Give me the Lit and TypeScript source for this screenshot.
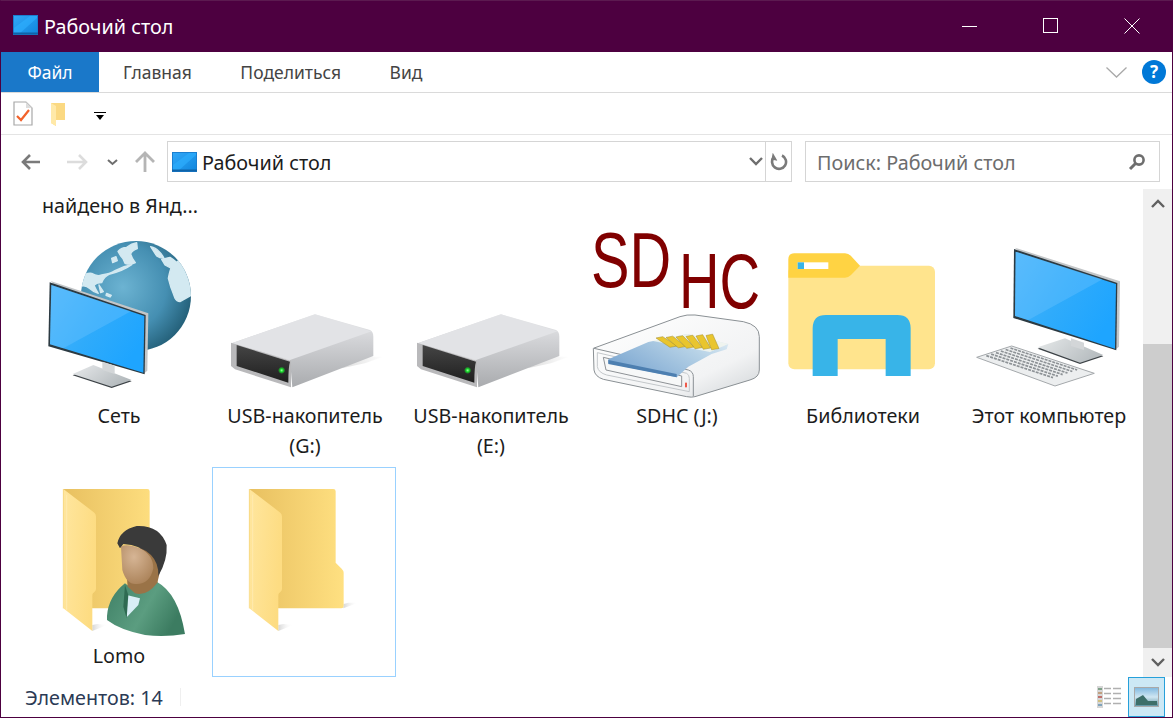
import { LitElement, html, css, svg } from "lit";
import { customElement } from "lit/decorators.js";

const desktop = svg`
  <defs><linearGradient id="dk" x1="0" y1="0" x2="1" y2="1"><stop offset="0" stop-color="#32a8f8"/><stop offset="1" stop-color="#0f86dd"/></linearGradient></defs>
  <rect x="0.5" y="0.5" width="24" height="19" fill="url(#dk)" stroke="#1a7fd0"/>
  <path d="M1 19V13L17 1H24V3L6 19Z" fill="#2fb0ff" opacity=".6"/>
  <rect x="0" y="17.5" width="25" height="2" fill="#0f63a8"/>`;

function monitor(ox: number, oy: number, p: number[][], id: string) {
  const [a, b, c, d] = p;
  return svg`<g transform="translate(${ox} ${oy}) scale(.3333)">
    <polygon points="${a[0] - 2},${a[1] - 12} ${b[0] + 12},${b[1] - 8} ${c[0] + 12},${c[1] - 6} ${c[0]},${c[1] + 4}" fill="#c3c6c8"/>
    <polygon points="${a[0] - 5},${a[1] - 8} ${b[0] + 4},${b[1] - 3} ${c[0] + 4},${c[1] + 5} ${d[0] - 5},${d[1] + 6}" fill="#2c3a42"/>
    <polygon points="${a.join(",")} ${b.join(",")} ${c.join(",")} ${d.join(",")}" fill="url(#${id})"/>
    <polygon points="${a.join(",")} ${b[0] - 40},${b[1] - 14} ${d[0] + 40},${d[1] + 12} ${d.join(",")}" fill="#72c6ff" opacity=".35"/>
  </g>`;
}
const scrGrad = (id: string) => svg`<linearGradient id="${id}" x1="0" y1="0" x2="1" y2=".6"><stop offset="0" stop-color="#4db6fb"/><stop offset=".55" stop-color="#2fabfb"/><stop offset="1" stop-color="#1ea5ff"/></linearGradient>`;

const stand = (pts: string, neck: string, id: string) => svg`
  <polygon points="${pts}" fill="#3c4246" transform="translate(0 4)"/>
  <polygon points="${pts}" fill="url(#${id})"/>
  <polygon points="${neck}" fill="#d3d6d8"/>`;

const network = svg`
  <defs>
    <radialGradient id="gl" cx=".38" cy=".42" r=".72"><stop offset="0" stop-color="#6cb3d2"/><stop offset=".55" stop-color="#458fb2"/><stop offset="1" stop-color="#1a5268"/></radialGradient>
    <clipPath id="gc"><circle cx="318" cy="198" r="165"/></clipPath>
    ${scrGrad("sn")}
    <linearGradient id="bs" x1="0" y1="0" x2="1" y2=".5"><stop offset="0" stop-color="#e8eaec"/><stop offset="1" stop-color="#b4babd"/></linearGradient>
  </defs>
  <g transform="translate(30 230) scale(.3333)">
    <circle cx="318" cy="198" r="165" fill="url(#gl)"/>
    <g clip-path="url(#gc)" fill="#d3e9f1" stroke="#d3e9f1" stroke-width="4" stroke-linejoin="round">
      <path d="M264 64Q275 52 290 52Q305 40 320 38L322 56Q305 62 302 72Q306 86 316 98Q300 106 285 100Q280 84 272 78Z"/>
      <path d="M245 85L258 80L262 92L248 98Z"/>
      <path d="M150 145Q165 128 185 130Q200 140 215 135Q240 132 255 122Q280 108 305 104Q280 122 240 132Q222 140 215 158Q200 158 192 166Q198 180 205 190Q188 184 180 176Q168 165 155 168Z"/>
      <path d="M230 190L244 196L240 201L228 196Z"/><path d="M207 165L220 185L212 188Z"/>
      <path d="M362 50Q378 54 385 62Q396 72 402 85Q388 84 380 78Z"/>
      <path d="M395 88L420 82Q440 94 450 110L430 118L405 105Z"/>
      <path d="M415 145Q420 120 425 110Q436 100 445 92L470 125L490 150L485 195L450 215Q440 215 435 205Q428 185 422 170Z"/>
    </g>
  </g>
  ${monitor(30, 230, [[64, 165], [343, 258], [340, 428], [60, 343]], "sn")}
  <g transform="translate(30 230) scale(.3333)">
    ${stand("128,432 190,405 305,450 245,470", "217,395 254,407 254,432 217,420", "bs")}
  </g>`;

const drive = (ox: number) => svg`
  <defs>
    <linearGradient id="ds" x1="0" y1="0" x2="0" y2="1"><stop offset="0" stop-color="#e9eaec"/><stop offset=".35" stop-color="#d2d3d6"/><stop offset="1" stop-color="#a9abae"/></linearGradient>
    <linearGradient id="df" x1="0" y1="0" x2="0" y2="1"><stop offset="0" stop-color="#454545"/><stop offset="1" stop-color="#1f1f1f"/></linearGradient>
    <linearGradient id="dsh" x1="0" y1="0" x2="1" y2="0"><stop offset="0" stop-color="#bbb"/><stop offset="1" stop-color="#fff"/></linearGradient>
    <radialGradient id="led"><stop offset="0" stop-color="#9dff9d"/><stop offset=".45" stop-color="#16d92a"/><stop offset="1" stop-color="#16d92a" stop-opacity="0"/></radialGradient>
  </defs>
  <g transform="translate(${ox} 300) scale(.3333)">
    <polygon points="440,170 505,170 450,190 380,205" fill="url(#dsh)" opacity=".5"/>
    <path d="M50 130L300 43L465 90Q475 95 475 110V168L232 262L225 180Z" fill="url(#ds)"/>
    <path d="M50 130L300 43L470 94L225 180Z" fill="#e2e3e6"/>
    <path d="M48 128L228 182V262L60 208L48 198Z" fill="#b9b9bb"/>
    <path d="M65 135L225 185Q220 200 220 248L65 198Z" fill="url(#df)"/>
    <circle cx="200" cy="211" r="11" fill="url(#led)"/>
  </g>`;

const contacts = [0, 1, 2, 3, 4, 5];
const sdhc = svg`
  <defs>
    <linearGradient id="cb" x1="0" y1="0" x2="1" y2="1"><stop offset="0" stop-color="#fff"/><stop offset=".7" stop-color="#f2f3f4"/><stop offset="1" stop-color="#cfd3d6"/></linearGradient>
    <linearGradient id="cc" x1="0" y1=".6" x2="1" y2="0"><stop offset="0" stop-color="#7fa9d2"/><stop offset=".6" stop-color="#b5d1e6"/><stop offset="1" stop-color="#e4eff5"/></linearGradient>
  </defs>
  <text class="sd" transform="translate(591 287) scale(.74 1)" font-size="78">SD</text>
  <text class="sd" transform="translate(679 308) scale(.72 1)" font-size="78">HC</text>
  <g transform="translate(580 220) scale(.3333)">
    <path d="M40 385L300 290Q320 283 345 285L490 305Q538 315 538 350V450Q538 472 510 480L345 530Q335 533 320 530L70 478Q45 470 42 450Z" fill="url(#cb)" stroke="#8a9094" stroke-width="3"/>
    <path d="M42 385L325 450Q340 455 340 470V528" fill="none" stroke="#8a9094" stroke-width="3"/>
    <path d="M52 398L320 460Q328 464 328 475V515L80 465Q55 458 52 440Z" fill="none" stroke="#c3c7ca" stroke-width="3"/>
    <path d="M70 412L305 468V500L78 450Z" fill="#f7f8f8" stroke="#8e9296" stroke-width="3"/>
    <path d="M85 418L205 366L322 342L445 372L440 388L395 402L325 440L290 472L85 430Z" fill="url(#cc)"/>
    <path d="M85 420L290 462V472L85 432Z" fill="#4d7fb0"/>
    <path d="M215 362L322 342L445 372L390 396Z" fill="#f6f7ef" opacity=".8"/>
    ${contacts.map((i) => svg`<polygon points="${228 + i * 30},${354 - i * 1.5} ${248 + i * 30},${350 - i * 1.5} ${292 + i * 25},${378 + i * 1.5} ${270 + i * 25},${382 + i * 1.5}" fill="#e9c52e" stroke="#a08a24" stroke-width="1.5"/>`)}
    <rect x="315" y="488" width="6" height="14" fill="#ef5a4a"/>
  </g>`;

const library = svg`
  <g transform="translate(775 240) scale(.3333)">
    <rect x="40" y="77" width="440" height="311" rx="18" fill="#ffe48d"/>
    <path d="M40 113V58Q40 40 58 40H210Q220 40 228 48L255 77L228 105Q220 113 210 113Z" fill="#ffd343"/>
    <rect x="68" y="67" width="92" height="20" fill="#fff"/>
    <rect x="68" y="67" width="19" height="20" fill="#38b4e8"/>
    <path d="M113 408V265Q113 225 153 225H367Q407 225 407 265V408H332V297H188V408Z" fill="#38b4e8"/>
  </g>`;

const computer = svg`
  <defs>
    ${scrGrad("sc")}
    <linearGradient id="bc" x1="0" y1="0" x2="1" y2=".4"><stop offset="0" stop-color="#e6e9ea"/><stop offset="1" stop-color="#b8bec1"/></linearGradient>
  </defs>
  <g transform="translate(965 240) scale(.3333)">
    ${stand("218,322 300,295 415,345 345,368", "318,295 357,308 357,330 318,318", "bc")}
  </g>
  ${monitor(965, 240, [[152, 35], [453, 132], [450, 326], [150, 228]], "sc")}
  <g transform="translate(965 240) scale(.3333)">
    <polygon points="35,352 140,318 388,400 270,438" fill="#eceeef" stroke="#a4a8ab" stroke-width="3" stroke-linejoin="round"/>
    ${[0, 1, 2, 3, 4, 5].map((i) => {
      const x = 64 + i * 14.5, y = 347 - i * 4.6;
      return svg`<line x1="${x}" y1="${y}" x2="${x + 200}" y2="${y + 66}" stroke="#8d9296" stroke-width="5" stroke-dasharray="9 3"/>`;
    })}
  </g>`;

const folder = (dx: number) => svg`
  <defs>
    <linearGradient id="fb" x1="0" y1="0" x2="1" y2="0"><stop offset="0" stop-color="#e8c060"/><stop offset="1" stop-color="#ffe081"/></linearGradient>
    <linearGradient id="ff" x1="0" y1="0" x2="1" y2=".3"><stop offset="0" stop-color="#ffe69e"/><stop offset="1" stop-color="#fddc82"/></linearGradient>
    <linearGradient id="fs" x1="0" y1="0" x2="1" y2="0"><stop offset="0" stop-color="#bbb"/><stop offset="1" stop-color="#fff" stop-opacity="0"/></linearGradient>
  </defs>
  <g transform="translate(${dx} 460) scale(.3333)">
    <polygon points="415,445 460,428 430,428 416,432" fill="url(#fs)" opacity=".6"/>
    <polygon points="220,513 265,495 235,492 220,495" fill="url(#fs)" opacity=".6"/>
    <path d="M133 87H385Q392 87 392 94V308L410 326Q416 332 416 338V438Q416 445 409 445H180V300H133Z" fill="url(#fb)"/>
    <path d="M133 87L226 158Q231 162 231 170V386Q231 392 226 396L222 400Q220 402 220 408V513L133 445Z" fill="url(#ff)"/>
    <path d="M143 104V450" stroke="#ffeab0" stroke-width="3"/>
    <path d="M133 87V445" stroke="#f7d67a" stroke-width="2"/>
  </g>`;

const lomo = svg`
  ${folder(19)}
  <defs>
    <linearGradient id="pb" x1="0" y1="0" x2="1" y2=".4"><stop offset="0" stop-color="#3f8066"/><stop offset=".6" stop-color="#5b9d80"/><stop offset="1" stop-color="#3c7c61"/></linearGradient>
    <radialGradient id="pf" cx=".4" cy=".3" r=".8"><stop offset="0" stop-color="#d6b595"/><stop offset="1" stop-color="#a87f55"/></radialGradient>
  </defs>
  <g transform="translate(45 480) scale(.3333)">
    <path d="M186 408Q190 350 240 310Q255 325 290 330Q320 325 335 305Q400 340 420 462Q360 472 300 465Q225 450 186 420Z" fill="url(#pb)"/>
    <path d="M245 345L285 355L280 375L245 412Z" fill="#d9eef5"/>
    <path d="M240 315L250 345L245 415L235 380Z" fill="#2f6b52"/>
    <path d="M245 285L290 195L335 215L346 270L337 308Q305 350 270 340L248 320Z" fill="#9a7347"/>
    <path d="M228 200Q245 190 285 205Q325 225 325 265Q315 312 275 312Q245 315 232 270Z" fill="url(#pf)"/>
    <path d="M217 190Q225 150 275 138Q345 135 365 195Q368 240 340 288Q342 250 318 225Q285 195 235 192L225 205Z" fill="#3a3a3a"/>
  </g>`;

const items = [
  { label: ["Сеть"], icon: network },
  { label: ["USB-накопитель", "(G:)"], icon: drive(215) },
  { label: ["USB-накопитель", "(E:)"], icon: drive(401) },
  { label: ["SDHC (J:)"], icon: sdhc },
  { label: ["Библиотеки"], icon: library },
  { label: ["Этот компьютер"], icon: computer },
];

@customElement("app-root")
export class AppRoot extends LitElement {
  static styles = css`
    :host { display: block; width: 1173px; height: 718px; box-sizing: border-box; border: 1px solid #4d0040; border-top-color: #5c1a50; background: #fff; font-family: "Noto Sans", "Open Sans", sans-serif; color: #1c1c1c; overflow: hidden; }
    svg { display: block; }
    .win { display: flex; flex-direction: column; height: 100%; }
    .title { height: 51px; flex: none; background: #4d0040; color: #fff; display: flex; align-items: center; font-size: 19.8px; }
    .title .ic { margin-left: 12px; margin-right: 6px; margin-top: -3px; }
    .title .name { flex: 1; }
    .wb { width: 81px; height: 51px; display: flex; align-items: center; justify-content: center; }
    .wbs { display: flex; margin-top: -1px; }
    .tabs { height: 40px; flex: none; border-bottom: 1px solid #dadada; display: flex; align-items: stretch; font-size: 17.5px; color: #444; }
    .file { width: 98px; background: #1a78c9; color: #fff; display: flex; align-items: center; justify-content: center; }
    .tab { display: flex; align-items: center; margin-left: 24px; }
    .tab + .tab { margin-left: 48.5px; }
    .spacer { flex: 1; }
    .rb { display: flex; align-items: center; gap: 15px; padding-right: 6px; }
    .help { width: 24px; height: 24px; border-radius: 50%; background: #0078d7; color: #fff; font-weight: 700; font-size: 17px; line-height: 24px; text-align: center; }
    .qat { height: 41px; flex: none; border-bottom: 1px solid #e4e4e4; display: flex; align-items: center; padding-left: 12px; }
    .qfolder { margin-left: 17px; }
    .qdrop { margin-left: 26px; margin-top: 7px; }
    .nav { height: 54px; flex: none; display: flex; align-items: flex-start; padding-top: 6px; box-sizing: border-box; }
    .navbtns { width: 166px; height: 41px; flex: none; padding-left: 19px; box-sizing: border-box; display: flex; align-items: center; }
    .addr { width: 625px; height: 41px; box-sizing: border-box; border: 1px solid #d5d5d5; display: flex; align-items: center; font-size: 19.8px; color: #1c1c1c; }
    .addr .ic { margin: 0 5px 0 4px; }
    .addr .path { flex: 1; padding-top: 1px; }
    .addr .dd { width: 24px; display: flex; justify-content: center; margin-right: -3px; }
    .addr .re { width: 25px; height: 100%; border-left: 1px solid #d5d5d5; display: flex; align-items: center; justify-content: center; }
    .search { margin-left: 13px; width: 355px; height: 41px; box-sizing: border-box; border: 1px solid #d5d5d5; display: flex; align-items: center; padding: 1px 13px 0 11px; font-size: 19.8px; color: #6d6d6d; justify-content: space-between; }
    .main { flex: 1; min-height: 0; display: flex; }
    .content { flex: 1; min-width: 0; overflow: hidden; }
    .grid { display: grid; grid-template-columns: repeat(6, 186px); grid-template-rows: 39px 239px 210px; padding-left: 25px; font-size: 19.7px; line-height: 30px; text-align: center; }
    .cutrow { grid-column: 1 / -1; text-align: left; padding-left: 16px; padding-top: 2px; }
    .tile { width: 186px; box-sizing: border-box; }
    .tile svg { overflow: visible; }
    .tile.sel { width: 184px; height: 210px; border: 1px solid #99d1ff; }
    .sd { font-family: "Liberation Sans", sans-serif; fill: #800000; }
    .sb { width: 29px; flex: none; background: #f0f0f0; display: flex; flex-direction: column; align-items: stretch; }
    .sbb { height: 29px; display: flex; align-items: center; justify-content: center; flex: none; }
    .track { flex: 1; padding-top: 126px; display: flex; flex-direction: column; }
    .thumb { flex: 1; background: #cdcdcd; }
    .status { height: 40px; flex: none; display: flex; align-items: center; font-size: 19.7px; padding-left: 24px; color: #2b3a55; }
    .status .sep { width: 1px; height: 18px; background: #efefef; margin-left: 17px; }
    .views { margin-left: auto; display: flex; align-items: center; margin-right: 7px; height: 100%; gap: 5px; }
    .viewsel { width: 37px; height: 40px; box-sizing: border-box; background: #cce8f5; border: 1px solid #26a0da; display: flex; align-items: center; justify-content: center; }
  `;

  render() {
    return html`<div class="win">
      <div class="title">
        <svg class="ic" width="25" height="20" viewBox="0 0 25 20">${desktop}</svg>
        <div class="name">Рабочий стол</div>
        <div class="wbs">
          <div class="wb"><svg width="16" height="16" viewBox="0 0 16 16"><path d="M0 8.5H15" stroke="#fff"/></svg></div>
          <div class="wb"><svg width="16" height="16" viewBox="0 0 16 16"><rect x="0.5" y="0.5" width="14" height="14" fill="none" stroke="#fff"/></svg></div>
          <div class="wb"><svg width="16" height="16" viewBox="0 0 16 16"><path d="M.5.5L15.5 15.5M15.5.5L.5 15.5" stroke="#fff"/></svg></div>
        </div>
      </div>
      <div class="tabs">
        <div class="file">Файл</div>
        <div class="tab">Главная</div><div class="tab">Поделиться</div><div class="tab">Вид</div>
        <div class="spacer"></div>
        <div class="rb">
          <svg width="21" height="11" viewBox="0 0 21 11"><path d="M.5.5L10.5 10L20.5.5" fill="none" stroke="#a9a9a9" stroke-width="1.3"/></svg>
          <div class="help">?</div>
        </div>
      </div>
      <div class="qat">
        <svg width="20" height="26" viewBox="0 0 20 26">
          <path d="M1 1H13L19 7V24H1Z" fill="#fff" stroke="#a8a8a8" stroke-width="1.2"/><path d="M13 1V7H19Z" fill="#ddd"/>
          <path d="M4 15L8 19L16 9" fill="none" stroke="#f2622b" stroke-width="2.2"/>
        </svg>
        <svg class="qfolder" width="18" height="24" viewBox="0 0 18 24">
          <path d="M1 1H15V18H6V24L1 21Z" fill="#fbd982"/><path d="M1 1L6 4V24L1 21Z" fill="#ffe9a8"/>
        </svg>
        <svg class="qdrop" width="13" height="11" viewBox="0 0 13 11"><path d="M0 .5H12" stroke="#000"/><path d="M2 3H10L6 8Z" fill="#000"/></svg>
      </div>
      <div class="nav">
        <div class="navbtns">
          <svg width="140" height="24" viewBox="0 0 140 24">
            <path d="M20 12H3M10 5L3 12L10 19" fill="none" stroke="#7a7a7a" stroke-width="2.6"/>
            <path d="M47 12H66M59 5L66 12L59 19" fill="none" stroke="#dcdcdc" stroke-width="2.6"/>
            <path d="M88 10L92.5 14L97 10" fill="none" stroke="#6e6e6e" stroke-width="2"/>
            <path d="M125 22V4M116 12L125 3L134 12" fill="none" stroke="#b5b5b5" stroke-width="2.8"/>
          </svg>
        </div>
        <div class="addr">
          <svg class="ic" width="25" height="20" viewBox="0 0 25 20">${desktop}</svg>
          <div class="path">Рабочий стол</div>
          <div class="dd"><svg width="14" height="9" viewBox="0 0 14 9"><path d="M1 1L7 7L13 1" fill="none" stroke="#6e6e6e" stroke-width="2.4"/></svg></div>
          <div class="re"><svg width="18" height="18" viewBox="0 0 18 18"><path d="M4 4A7 7 0 1 0 12 2.5" fill="none" stroke="#7a7a7a" stroke-width="2.6"/><path d="M2 0V7H8Z" fill="#7a7a7a" transform="rotate(10 4 4)"/></svg></div>
        </div>
        <div class="search">
          <span>Поиск: Рабочий стол</span>
          <svg width="18" height="18" viewBox="0 0 18 18"><circle cx="11" cy="7" r="4.6" fill="none" stroke="#6e6e6e" stroke-width="2.6"/><path d="M7.5 10.5L2 16" stroke="#6e6e6e" stroke-width="3"/></svg>
        </div>
      </div>
      <div class="main">
        <div class="content">
          <div class="grid">
            <div class="cutrow">найдено в Янд...</div>
            ${items.map((it, i) => html`<div class="tile">
              <svg width="186" height="173" viewBox="${26 + i * 186} 228 186 173">${it.icon}</svg>
              ${it.label.map((l) => html`<div>${l}</div>`)}
            </div>`)}
            <div class="tile">
              <svg width="186" height="174" viewBox="26 467 186 174">${lomo}</svg>
              <div>Lomo</div>
            </div>
            <div class="tile sel">
              <svg width="182" height="174" viewBox="213 468 182 174">${folder(205)}</svg>
            </div>
          </div>
        </div>
        <div class="sb">
          <div class="sbb"><svg width="14" height="9" viewBox="0 0 14 9"><path d="M1 8L7 2L13 8" fill="none" stroke="#606060" stroke-width="2.4"/></svg></div>
          <div class="track"><div class="thumb"></div></div>
          <div class="sbb"><svg width="14" height="9" viewBox="0 0 14 9"><path d="M1 1L7 7L13 1" fill="none" stroke="#606060" stroke-width="2.4"/></svg></div>
        </div>
      </div>
      <div class="status">
        <span>Элементов: 14</span><span class="sep"></span>
        <div class="views">
          <svg width="26" height="24" viewBox="0 0 26 24">
            <rect x="0" y="1" width="6" height="22" fill="#d6d6d6"/>
            <rect x="1" y="3" width="4" height="2" fill="#7fa088"/><rect x="1" y="7" width="4" height="2" fill="#c0a080"/><rect x="1" y="11" width="4" height="2" fill="#c0706a"/><rect x="1" y="15" width="4" height="2" fill="#d0c080"/><rect x="1" y="19" width="4" height="2" fill="#80a4bc"/>
            <path d="M7 3.5H14M16 3.5H24M7 8.5H14M16 8.5H24M7 13.5H14M16 13.5H24M7 18.5H14M16 18.5H24" stroke="#b0b0b0" stroke-width="1.4"/>
          </svg>
          <div class="viewsel">
            <svg width="25" height="20" viewBox="0 0 25 20">
              <defs><linearGradient id="ph" x1="0" y1="0" x2="0" y2="1"><stop offset="0" stop-color="#7fb8e0"/><stop offset=".5" stop-color="#cfe6f2"/><stop offset="1" stop-color="#5a8f9f"/></linearGradient></defs>
              <rect x="0.5" y="0.5" width="24" height="19" fill="url(#ph)" stroke="#a9a9a9"/>
              <path d="M2 12L9 8L14 14L23 14V18H2Z" fill="#3d6f6a"/>
            </svg>
          </div>
        </div>
      </div>
    </div>`;
  }
}
